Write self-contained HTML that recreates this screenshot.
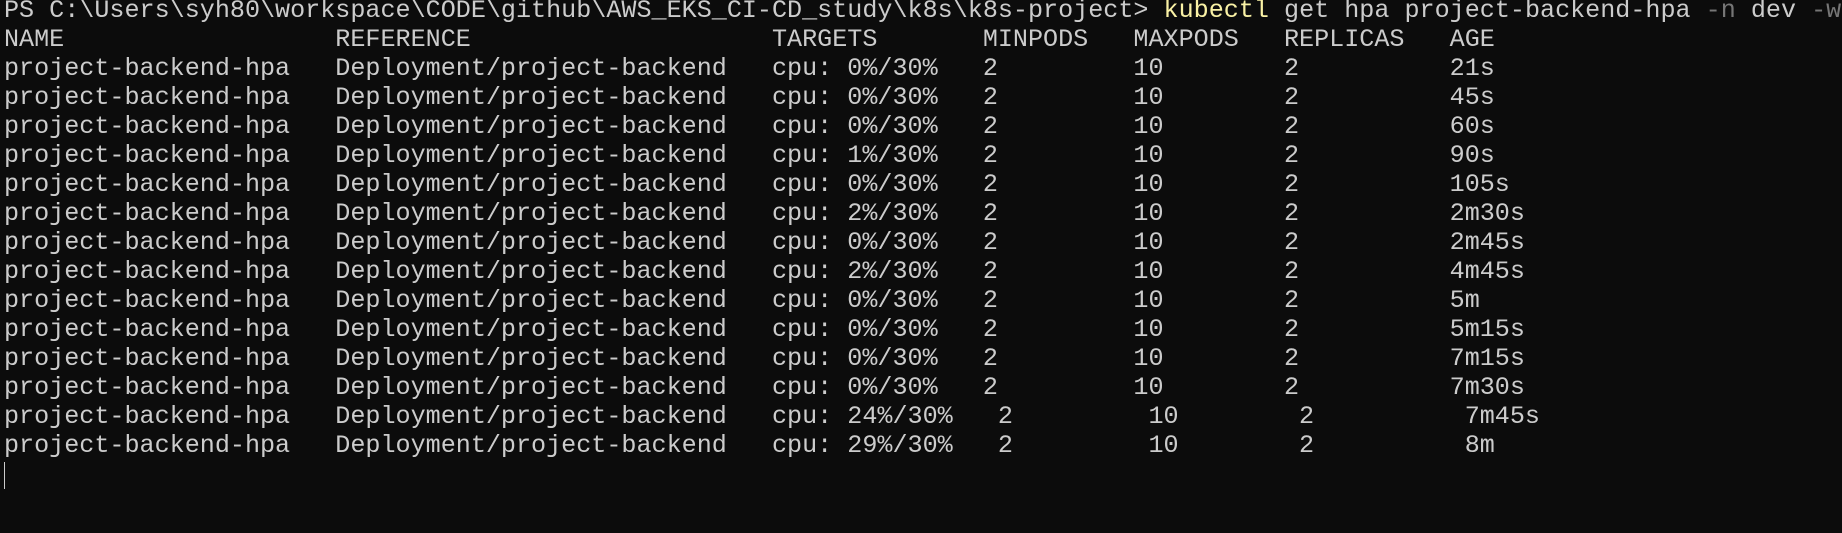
<!DOCTYPE html>
<html><head><meta charset="utf-8"><style>
html,body{margin:0;padding:0;background:#0c0c0c;width:1842px;height:533px;overflow:hidden}
pre{margin:0;position:absolute;left:4px;top:-4px;font-family:"Liberation Mono",monospace;font-size:25.1px;line-height:29px;color:#cccccc;white-space:pre}
.y{color:#f9f1a5}.g{color:#767676}
.cur{position:absolute;left:4px;top:462px;width:1px;height:27px;background:#cccccc}
</style></head><body>
<pre>PS C:\Users\syh80\workspace\CODE\github\AWS_EKS_CI-CD_study\k8s\k8s-project&gt; <span class="y">kubectl</span> get hpa project-backend-hpa <span class="g">-n</span> dev <span class="g">-w</span>
NAME                  REFERENCE                    TARGETS       MINPODS   MAXPODS   REPLICAS   AGE
project-backend-hpa   Deployment/project-backend   cpu: 0%/30%   2         10        2          21s
project-backend-hpa   Deployment/project-backend   cpu: 0%/30%   2         10        2          45s
project-backend-hpa   Deployment/project-backend   cpu: 0%/30%   2         10        2          60s
project-backend-hpa   Deployment/project-backend   cpu: 1%/30%   2         10        2          90s
project-backend-hpa   Deployment/project-backend   cpu: 0%/30%   2         10        2          105s
project-backend-hpa   Deployment/project-backend   cpu: 2%/30%   2         10        2          2m30s
project-backend-hpa   Deployment/project-backend   cpu: 0%/30%   2         10        2          2m45s
project-backend-hpa   Deployment/project-backend   cpu: 2%/30%   2         10        2          4m45s
project-backend-hpa   Deployment/project-backend   cpu: 0%/30%   2         10        2          5m
project-backend-hpa   Deployment/project-backend   cpu: 0%/30%   2         10        2          5m15s
project-backend-hpa   Deployment/project-backend   cpu: 0%/30%   2         10        2          7m15s
project-backend-hpa   Deployment/project-backend   cpu: 0%/30%   2         10        2          7m30s
project-backend-hpa   Deployment/project-backend   cpu: 24%/30%   2         10        2          7m45s
project-backend-hpa   Deployment/project-backend   cpu: 29%/30%   2         10        2          8m</pre>
<div class="cur"></div>
</body></html>
